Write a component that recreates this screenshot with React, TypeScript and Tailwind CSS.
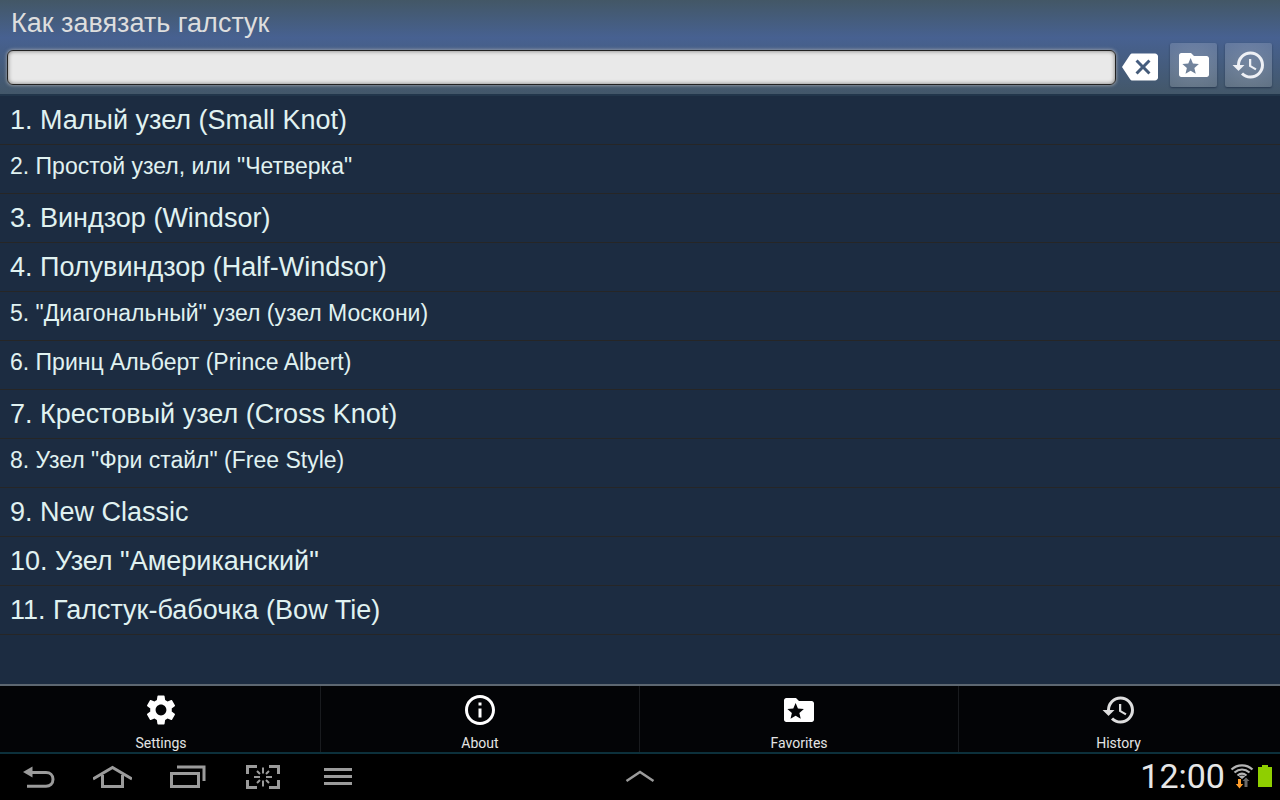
import { MdBackspace, MdHistory, MdInfoOutline, MdSettings } from "react-icons/md"

interface Knot {
  title: string
  compact?: boolean
}

const knots: Knot[] = [
  { title: "1. Малый узел (Small Knot)" },
  { title: '2. Простой узел, или "Четверка"', compact: true },
  { title: "3. Виндзор (Windsor)" },
  { title: "4. Полувиндзор (Half-Windsor)" },
  { title: '5. "Диагональный" узел (узел Москони)', compact: true },
  { title: "6. Принц Альберт (Prince Albert)", compact: true },
  { title: "7. Крестовый узел (Cross Knot)" },
  { title: '8. Узел "Фри стайл" (Free Style)', compact: true },
  { title: "9. New Classic" },
  { title: '10. Узел "Американский"' },
  { title: "11. Галстук-бабочка (Bow Tie)" },
]

function FolderStar({ size }: { size: number }) {
  return (
    <svg width={size} height={size} viewBox="0 0 24 24" fill="currentColor" aria-hidden="true">
      <path
        fillRule="evenodd"
        d="M20.5 6H12l-2-2H3.5C2.7 4 2 4.7 2 5.5v13c0 .8.7 1.5 1.5 1.5h17c.8 0 1.5-.7 1.5-1.5v-11c0-.8-.7-1.5-1.5-1.5zM9.75 7.4l1.55 3.65 3.95.35-3 2.6.9 3.85-3.4-2-3.4 2 .9-3.85-3-2.6 3.95-.35z"
      />
    </svg>
  )
}

const menu = [
  { label: "Settings", icon: <MdSettings size={36} /> },
  { label: "About", icon: <MdInfoOutline size={36} /> },
  { label: "Favorites", icon: <FolderStar size={36} /> },
  { label: "History", icon: <MdHistory size={36} className="text-[#dedede]" /> },
]

const toolButton =
  "flex h-11 w-[47px] items-center justify-center rounded-xs bg-radial from-white/25 to-white/15 text-white shadow-[0_1px_2px_rgba(20,35,60,0.6)]"

function Header() {
  return (
    <header className="bg-linear-to-b from-[#435766] via-[#476191] via-40% to-[#435769] pb-[7px]">
      <h1 className="px-[11px] pt-2 text-[27px] leading-[30px] text-[#dedede]">Как завязать галстук</h1>
      <form className="flex items-start gap-2 pt-[5px] pr-2 pl-[7px]" onSubmit={(e) => e.preventDefault()}>
        <div className="mr-1 flex min-w-0 flex-1 items-end gap-[6px] pt-[6px]">
          <input
            type="text"
            aria-label="Поиск"
            className="h-[35px] min-w-0 flex-1 rounded-md border border-[#222] bg-[#e9e9e9] px-3 text-xl text-[#222] shadow-[0_0_3px_1px_rgba(180,180,180,0.6),inset_0_0_4px_rgba(0,0,0,0.5)] outline-none"
          />
          <button type="button" aria-label="Очистить" className="text-white">
            <MdBackspace size={36} />
          </button>
        </div>
        <button type="button" aria-label="Избранное" className={toolButton}>
          <FolderStar size={36} />
        </button>
        <button type="button" aria-label="История" className={toolButton}>
          <MdHistory size={36} className="text-[#eef0f5]" />
        </button>
      </form>
    </header>
  )
}

function MenuBar() {
  return (
    <nav className="grid grid-cols-4 border-t-2 border-b-2 border-t-[#5d6771] border-b-[#0c303b] bg-[#030406] px-[2px]">
      {menu.map((item) => (
        <button
          key={item.label}
          type="button"
          className="flex flex-col items-center gap-[6px] border-r border-[#191b1e] pt-[6px] font-[Roboto,sans-serif] text-sm leading-[18px] text-[#e4e4e4] last:border-r-0"
        >
          <span className="text-white">{item.icon}</span>
          {item.label}
        </button>
      ))}
    </nav>
  )
}

function SystemBar() {
  return (
    <footer className="grid h-[46px] grid-cols-3 items-center bg-black text-[#9b9b9b]">
      <div className="flex items-center pl-[22px]">
        <button type="button" aria-label="Back" className="mr-[38px]">
          <svg width="33" height="24" viewBox="0 0 33 24" fill="none">
            <path d="M9 7.5h15c4 0 7 2.600 7 6.800s-3 6.900-7 6.900H5" stroke="currentColor" strokeWidth="3" />
            <path d="M1 7L10.500 1.500v11z" fill="currentColor" />
          </svg>
        </button>
        <button type="button" aria-label="Home" className="mr-[38px]">
          <svg width="39" height="24" viewBox="0 0 39 24" fill="none" stroke="currentColor" strokeWidth="3">
            <path d="M0 14L19.500 2.500 39 14" />
            <path d="M9.500 10v11.500h20V10" />
          </svg>
        </button>
        <button type="button" aria-label="Recent apps" className="mr-10">
          <svg width="36" height="24" viewBox="0 0 36 24" fill="none" stroke="currentColor" strokeWidth="3">
            <path d="M7 2h27v14" />
            <path d="M1.500 8.500h27v13h-27z" />
          </svg>
        </button>
        <button type="button" aria-label="Screenshot" className="mr-11">
          <svg width="34" height="26" viewBox="0 0 34 26" fill="none" stroke="currentColor">
            <path
              d="M1.500 10V2.500H11M23 2.500h9.500V10M32.500 16v7.500H23M11 23.500H1.500V16"
              strokeWidth="3"
            />
            <path
              d="M17 3.500v6M17 16.500v6M8 13h6M20 13h6M11 7l3 3M23 7l-3 3M11 19l3-3M23 19l-3-3"
              strokeWidth="2"
            />
          </svg>
        </button>
        <button type="button" aria-label="Menu">
          <svg width="28" height="24" viewBox="0 0 28 24" stroke="currentColor" strokeWidth="3">
            <path d="M0 4.500h28M0 11.500h28M0 18.500h28" />
          </svg>
        </button>
      </div>
      <button type="button" aria-label="Open tray" className="justify-self-center">
        <svg width="30" height="14" viewBox="0 0 30 14" fill="none">
          <path d="M1.500 11L15 2l13.500 9" stroke="currentColor" strokeWidth="2.500" />
        </svg>
      </button>
      <div className="flex items-center justify-end pr-2 pb-[2px]">
        <time className="font-[Roboto,sans-serif] text-[34px] leading-10 text-[#e6e6e6]">12:00</time>
        <svg width="24" height="26" viewBox="0 0 24 26" fill="none" className="ml-[5px]">
          <g stroke="#b5b5b5" strokeWidth="2.200">
            <path d="M1.500 6.500c6-5.600 15-5.600 21 0" />
            <path d="M4.500 9.500c4.500-4 10.500-4 15 0" />
            <path d="M7.500 12.500c3-2.400 6-2.400 9 0" />
          </g>
          <path d="M8.800 13.500c2-1.400 4.400-1.400 6.400 0L12 16z" fill="#b5b5b5" />
          <path d="M8 16h3v5h2.200L9.500 25.500 5.800 21H8z" fill="#ff9d2b" />
          <path d="M14.500 24v-6h-2l3.500-3.500 3.500 3.500h-2v6z" fill="#6a6a6a" />
        </svg>
        <svg width="14" height="22" viewBox="0 0 14 22" className="ml-1">
          <path d="M4 0h6v2h4v20H0V2h4z" fill="#8fcf00" />
        </svg>
      </div>
    </footer>
  )
}

export default function App() {
  return (
    <div className="flex min-h-screen flex-col bg-[#1c2c41] font-['Liberation_Sans',Arial,sans-serif]">
      <Header />
      <main className="flex-1 border-t-2 border-[#22364b]">
        <ul>
          {knots.map((knot) => (
            <li key={knot.title} className="border-b border-[#262626]">
              <button
                type="button"
                className={`flex h-12 w-full items-start px-[10px] pt-2 text-left text-[#e0f2f1] ${
                  knot.compact ? "text-[23px] leading-[27px]" : "text-[27px] leading-8"
                }`}
              >
                {knot.title}
              </button>
            </li>
          ))}
        </ul>
      </main>
      <MenuBar />
      <SystemBar />
    </div>
  )
}
